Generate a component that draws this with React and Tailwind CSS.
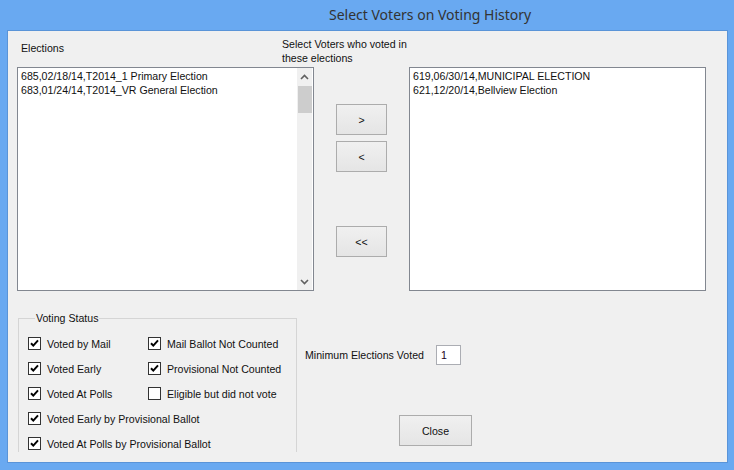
const leftItems = ['685,02/18/14,T2014_1 Primary Election', '683,01/24/14,T2014_VR General Election'];
const rightItems = ['619,06/30/14,MUNICIPAL ELECTION', '621,12/20/14,Bellview Election'];

function Check({ checked, label }) {
    return (
        <div className="flex h-[25px] items-center gap-[6px]">
            <span className="flex size-[13px] shrink-0 items-center justify-center border border-[#333] bg-white">
                {checked && (
                    <svg viewBox="0 0 11 11" className="size-[11px]">
                        <path d="M2 5.2 L4.3 7.6 L9 2.3" fill="none" stroke="#000" strokeWidth="2" />
                    </svg>
                )}
            </span>
            <span className="whitespace-nowrap">{label}</span>
        </div>
    );
}

function WinButton({ children, className }) {
    return (
        <div className={`flex items-center justify-center border border-[#acacac] bg-gradient-to-b from-[#f0f0f0] to-[#e5e5e5] ${className}`}>
            {children}
        </div>
    );
}

function Chevron({ down }) {
    return (
        <svg viewBox="0 0 9 6" className="h-[6px] w-[9px]">
            <path d={down ? 'M1 1 L4.5 4.5 L8 1' : 'M1 5 L4.5 1.5 L8 5'} fill="none" stroke="#606060" strokeWidth="1.6" />
        </svg>
    );
}

export default function App() {
    return (
        <div className="flex h-[470px] w-[734px] flex-col overflow-hidden bg-[#69a9f1] text-[10.6px] leading-[14px] text-[#111]" style={{ fontFamily: '"Liberation Sans", Arial, sans-serif' }}>
            <div className="flex h-[30px] shrink-0 items-center pl-[329px] text-[14px] text-[#333]" style={{ fontFamily: '"Noto Sans", "Open Sans", sans-serif' }}>
                Select Voters on Voting History
            </div>
            <div className="ml-[7px] h-[433px] w-[721px] border border-[#5a94d8] bg-[#f0f0f0]">
                {/* labels */}
                <div className="flex h-[36px]">
                    <div className="w-[274px] pl-[13px] pt-[10px]">Elections</div>
                    <div className="pt-[6px]">
                        <p>Select Voters who voted in</p>
                        <p>these elections</p>
                    </div>
                </div>

                {/* lists */}
                <div className="flex pl-[9px]">
                    <div className="flex h-[224px] w-[297px] border border-[#828790] bg-white">
                        <div className="flex-1 pl-[3px] pt-[1px]">
                            {leftItems.map((item) => (
                                <p key={item}>{item}</p>
                            ))}
                        </div>
                        <div className="mr-[1px] flex w-[15px] flex-col items-center bg-[#f0f0f0]">
                            <div className="flex h-[17px] items-center">
                                <Chevron />
                            </div>
                            <div className="mt-[1px] h-[27px] w-[14px] bg-[#cdcdcd]" />
                            <div className="flex-1" />
                            <div className="flex h-[17px] items-center">
                                <Chevron down />
                            </div>
                        </div>
                    </div>

                    <div className="ml-[22px] flex w-[51px] flex-col pt-[37px]">
                        <WinButton className="h-[31px]">&gt;</WinButton>
                        <WinButton className="mt-[6px] h-[31px]">&lt;</WinButton>
                        <WinButton className="mt-[54px] h-[31px]">&lt;&lt;</WinButton>
                    </div>

                    <div className="ml-[22px] h-[224px] w-[297px] border border-[#828790] bg-white pl-[3px] pt-[1px]">
                        {rightItems.map((item) => (
                            <p key={item}>{item}</p>
                        ))}
                    </div>
                </div>

                {/* bottom */}
                <div className="flex">
                    <fieldset className="ml-[10px] mt-[20px] h-[141px] w-[279px] border border-b-0 border-[#d5d5d5] pl-[9px] pt-[6px]">
                        <legend className="ml-[7px] px-[1px]">Voting Status</legend>
                        <div className="grid grid-cols-[120px_1fr]">
                            <Check checked label="Voted by Mail" />
                            <Check checked label="Mail Ballot Not Counted" />
                            <Check checked label="Voted Early" />
                            <Check checked label="Provisional Not Counted" />
                            <Check checked label="Voted At Polls" />
                            <Check label="Eligible but did not vote" />
                        </div>
                        <Check checked label="Voted Early by Provisional Ballot" />
                        <Check checked label="Voted At Polls by Provisional Ballot" />
                    </fieldset>

                    <div className="ml-[8px] pt-[54px]">
                        <div className="flex items-center">
                            <span className="w-[131px]">Minimum Elections Voted</span>
                            <div className="flex h-[20px] w-[25px] items-center border border-[#abadb3] bg-white pl-[4px] text-[#200020]">1</div>
                        </div>
                        <WinButton className="ml-[94px] mt-[50px] h-[31px] w-[73px]">Close</WinButton>
                    </div>
                </div>
            </div>
        </div>
    );
}
